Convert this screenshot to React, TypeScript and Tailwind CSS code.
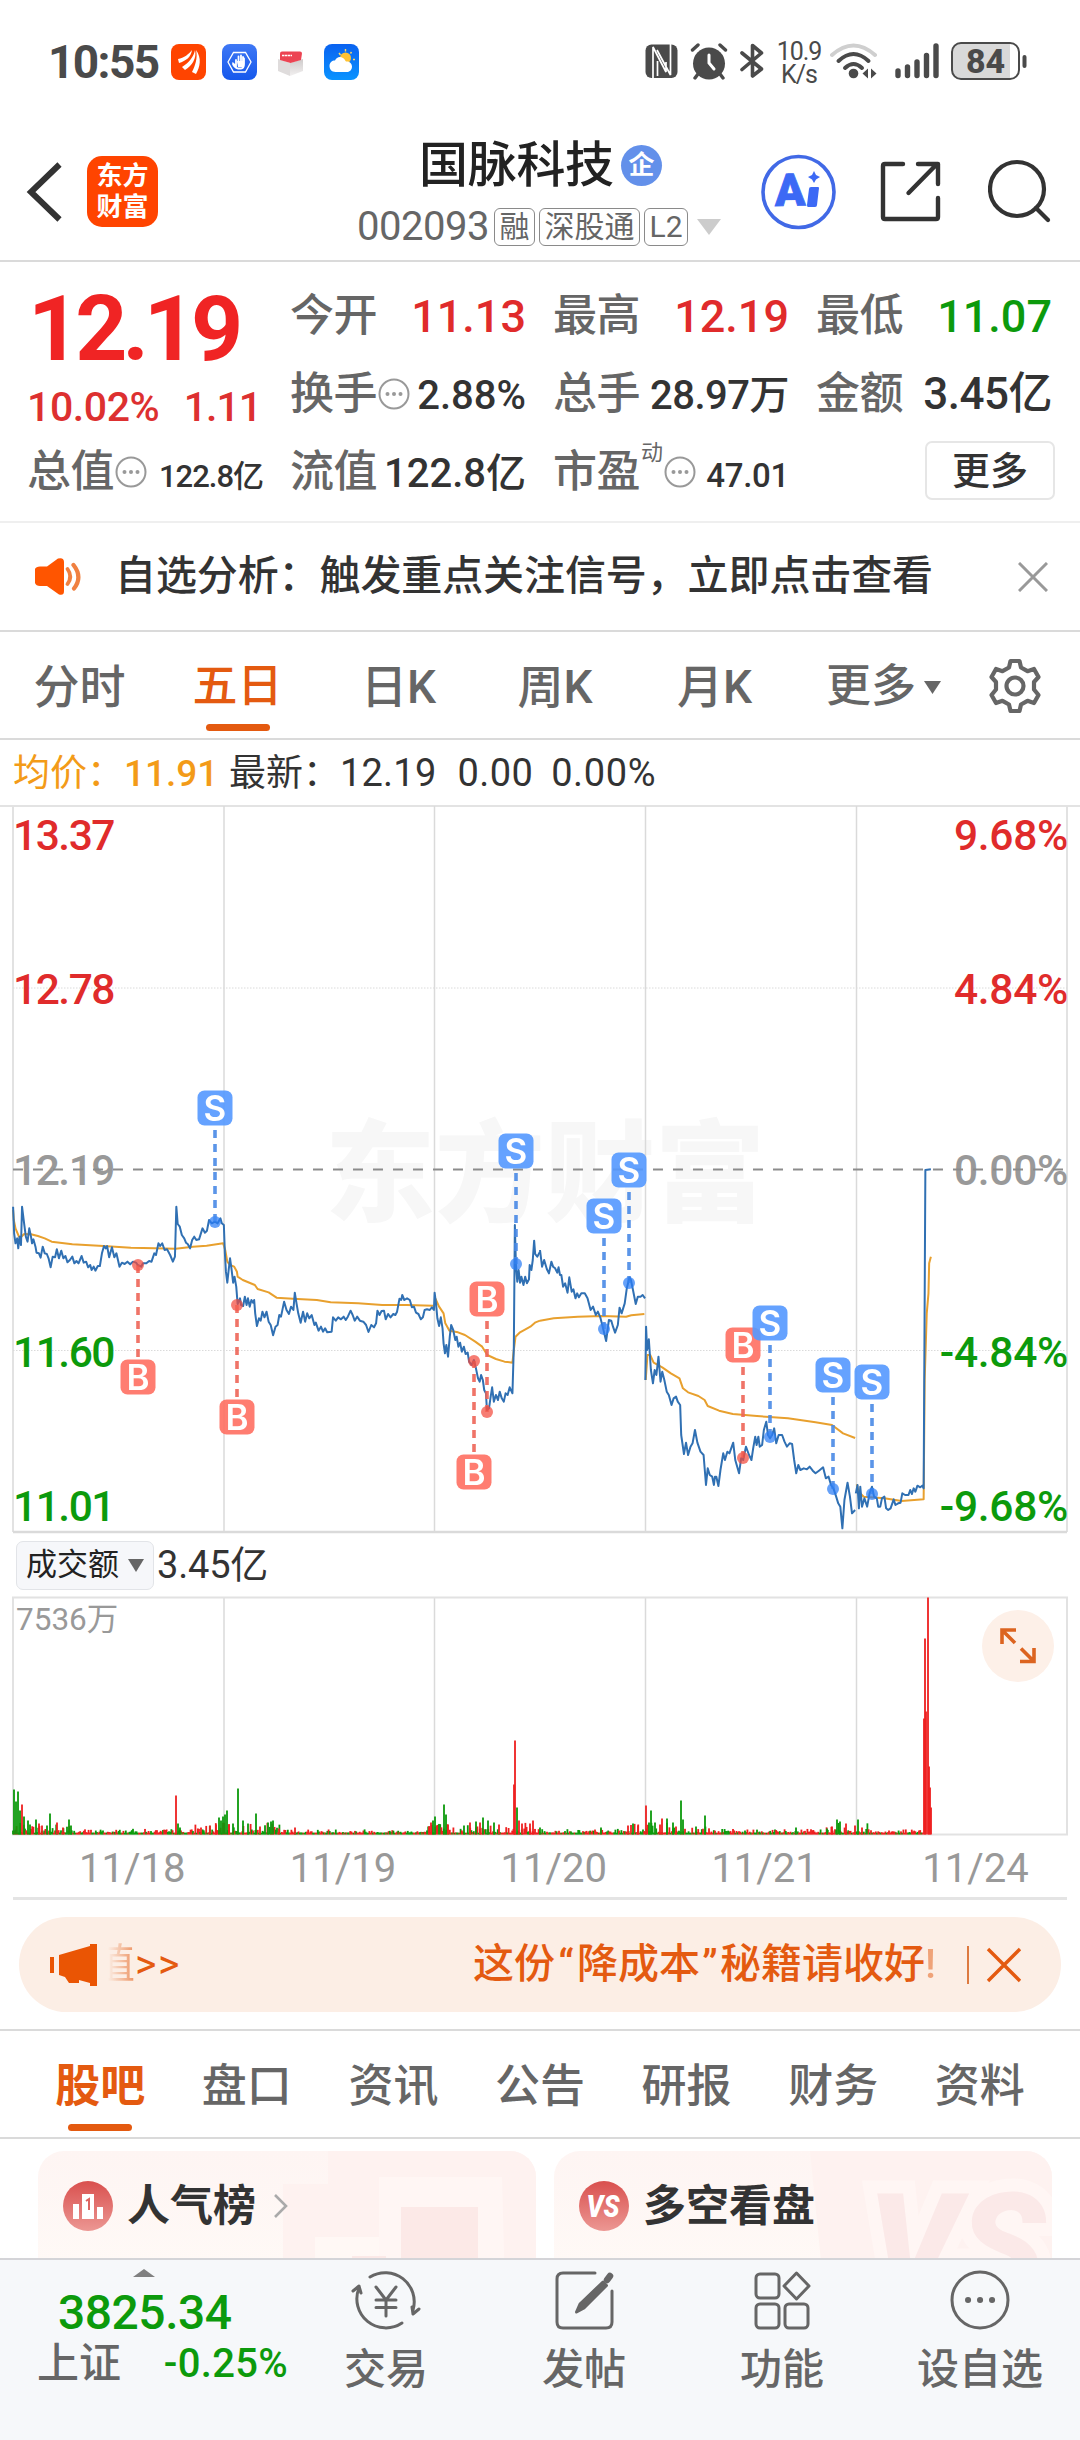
import type { ReactNode } from 'react';

const RED = '#ee2020';
const GREEN = '#0c9a0c';

const periods = [
  { name: '分时', width: 'w-[159px]' },
  { name: '五日', width: 'w-[157px]', active: true },
  { name: '日K', width: 'w-[165px]' },
  { name: '周K', width: 'w-[148px]' },
  { name: '月K', width: 'w-[171px]' },
];

const sections = ['股吧', '盘口', '资讯', '公告', '研报', '财务', '资料'];
const dates = ['11/18', '11/19', '11/20', '11/21', '11/24'];

const signals = [
  { type: 'S', x: 215, box: 1108, dot: 1222 },
  { type: 'B', x: 138, box: 1377, dot: 1265 },
  { type: 'B', x: 237, box: 1417, dot: 1305 },
  { type: 'B', x: 474, box: 1472, dot: 1361 },
  { type: 'B', x: 487, box: 1299, dot: 1412 },
  { type: 'S', x: 516, box: 1151, dot: 1264 },
  { type: 'S', x: 604, box: 1216, dot: 1329 },
  { type: 'S', x: 629, box: 1170, dot: 1283 },
  { type: 'B', x: 743, box: 1345, dot: 1458 },
  { type: 'S', x: 770, box: 1323, dot: 1437 },
  { type: 'S', x: 833, box: 1375, dot: 1489 },
  { type: 'S', x: 872, box: 1382, dot: 1494 },
];

const axisLabels = [
  { y: 850, left: '13.37', right: '9.68%', color: '#e02b2b' },
  { y: 1004, left: '12.78', right: '4.84%', color: '#e02b2b' },
  { y: 1185, left: '12.19', right: '0.00%', color: '#999999' },
  { y: 1367, left: '11.60', right: '-4.84%', color: GREEN },
  { y: 1521, left: '11.01', right: '-9.68%', color: GREEN },
];

// price line, first half of the window (days 1-3)
const priceA =
  '38,380 41,460 45,490 50,475 53,505 57,470 61,495 64,380 70,430 75,470 80,485 85,445 90,470 93,490 97,478 103,500 106,518 113,520 118,533 124,500 130,520 136,522 141,535 147,562 153,530 160,532 165,508 171,535 178,512 184,535 190,528 196,547 203,540 210,530 216,550 222,543 228,550 237,528 243,548 250,545 256,562 262,555 266,570 272,560 277,572 284,558 290,558 296,520 302,498 307,505 311,498 317,532 325,502 332,532 338,520 347,560 354,548 362,552 370,545 378,553 386,545 395,548 400,555 410,560 415,550 425,550 433,543 440,545 448,520 453,525 460,490 465,498 471,490 478,510 485,508 494,525 502,545 508,530 512,380 516,432 522,440 528,465 535,475 540,488 545,492 552,505 558,480 564,470 570,480 578,478 585,455 588,445 595,458 601,452 607,420 615,430 624,425 632,430 640,415 644,430 650,435 ' +
  '653,520 656,575 660,608 664,570 668,535 672,565 677,608 681,590 686,620 690,672 697,655 700,675 706,678 711,650 716,675 720,655 725,680 730,660 735,668 738,660 741,700 746,738 752,715 757,722 762,695 768,712 774,695 780,725 786,735 793,766 800,740 806,735 811,705 816,710 825,665 832,690 839,702 845,680 852,690 856,638 861,670 866,700 873,728 880,695 886,725 892,700 898,715 905,705 913,735 917,728 925,752 932,740 938,755 944,745 950,757 963,755 967,712 975,722 982,712 990,718 998,710 1004,720 1010,710 1018,692 1024,705 1030,722 1037,710 1045,722 1055,725 1063,735 1070,756 1078,735 1086,742 1092,730 1096,692 1102,705 1108,693 1115,692 1120,718 1127,702 1134,712 1142,702 1148,705 1153,695 1160,656 1165,660 1168,645 1174,660 1182,655 1190,660 1196,682 1202,680 1208,698 1215,702 1222,718 1228,712 1233,690 1240,688 1248,690 1254,682 1260,690 ' +
  '1262,638 1266,670 1270,715 1275,738 1280,712 1285,745 1288,790 1292,820 1296,795 1301,830 1306,770 1310,735 1316,750 1322,780 1326,770 1331,800 1336,788 1341,815 1347,800 1352,822 1358,818 1362,845 1370,855 1376,840 1382,865 1388,895 1393,905 1397,885 1402,900 1406,930 1411,940 1414,990 1420,985 1424,955 1429,922 1434,965 1440,945 1446,960 1451,935 1457,955 1463,965 1468,940 1474,945 1480,922 1488,940 1492,800 1495,435 1498,552 1502,605 1506,570 1510,608 1514,590 1520,615 1525,590 1530,610 1536,598 1538,555 1543,570 1547,540 1551,482 1554,522 1560,530 1568,515';

// second half (days 3-5), each session starts its own line
const priceB = [
  '0,510 6,560 12,540 20,568 26,580 33,545 38,560 44,565 50,578 54,562 58,585 62,585 67,620 73,610 80,638 85,592 92,635 97,628 103,655 108,640 113,652 120,640 130,640 138,655 147,690 154,680 162,705 168,695 175,712 182,740 192,783 200,720 207,722 212,740 218,758 226,735 231,683 237,700 246,670 252,625 260,592 264,600 270,630 278,672 284,650 292,650 298,645 305,655',
  '306,900 308,740 311,810 316,778 322,870 328,910 333,870 338,885 344,830 350,905 355,875 361,900 368,935 374,945 382,975 388,955 395,950 400,965 407,975 410,1065 418,1122 424,1088 430,1125 437,1100 443,1090 450,1050 457,1088 466,1115 475,1125 482,1215 487,1165 493,1185 500,1190 505,1215 508,1190 512,1190 518,1218 524,1170 532,1120 537,1140 544,1115 550,1120 561,1088 567,1140 578,1180 584,1135 590,1140 598,1100 607,1125 614,1140 619,1105 625,1070 629,1095 634,1070 638,1100 645,1095 650,1050 657,1025 662,1065 668,1075 674,1065 680,1045 686,1090 693,1065 703,1065 710,1085 717,1100 725,1090 732,1092 738,1140 744,1180 750,1155 756,1170 766,1165 775,1168 783,1160 792,1172 800,1180 810,1172 822,1162 830,1195 838,1190 845,1215 852,1225 860,1250 866,1270 872,1280 878,1345 884,1260 893,1208 900,1250 906,1300 915,1290',
  '917,1240 922,1215 926,1285 930,1220 935,1280 942,1255 950,1280 957,1240 964,1220 970,1250 978,1255 982,1280 988,1280 993,1255 1000,1250 1005,1285 1011,1290 1018,1285 1027,1258 1032,1275 1040,1270 1047,1268 1052,1240 1060,1245 1070,1245 1075,1230 1080,1242 1085,1225 1090,1235 1096,1217 1104,1222 1110,1217 1114,1225 1119,270 1135,268',
];

const averageA = [
  '38,390 40,420 45,445 55,470 62,470 70,462 90,463 110,468 130,475 150,485 180,489 210,493 300,498 380,503 450,505 510,506 560,500 600,497 648,490 654,510 660,545 668,555 680,560 688,575 690,590 705,600 740,615 748,627 780,637 803,653 850,656 920,660 960,667 1040,670 1110,675 1180,675 1258,677',
  '1264,655 1275,680 1288,700 1293,730 1305,752 1330,757 1350,765 1380,785 1400,800 1415,825 1440,837 1465,845 1488,848 1492,810 1497,770 1510,757 1540,740 1555,727 1568,722',
];

const averageB = [
  '0,722 40,715 110,710 180,708 250,710 265,706 303,702',
  '307,900 312,825 320,825 330,848 355,862 380,880 405,895 415,925 430,937 460,948 478,960 487,978 520,992 560,1002 630,1008 720,1015 800,1027 848,1035 880,1060 915,1074',
  '920,1213 925,1235 940,1250 1000,1255 1050,1263 1114,1258 1117,900 1123,700 1128,640 1130,550 1135,530',
];

// [x, height, up]
const spikes: [number, number, number][] = [
  [14, 45, 0], [16, 33, 0], [18, 43, 0], [20, 24, 0], [22, 30, 1], [24, 18, 0], [28, 14, 0], [30, 10, 0], [36, 15, 0], [39, 11, 1], [42, 9, 1], [47, 9, 0], [50, 21, 0], [57, 12, 1], [63, 7, 1], [69, 15, 0], [71, 9, 0],
  [176, 39, 1], [178, 11, 0], [180, 7, 0], [201, 7, 1], [210, 9, 1], [216, 10, 1], [219, 17, 0], [221, 14, 0], [223, 18, 0], [225, 20, 0], [227, 24, 0], [229, 10, 1], [233, 11, 0], [238, 46, 0], [243, 14, 0], [248, 11, 0], [256, 21, 0], [260, 8, 1], [268, 12, 0], [271, 13, 0], [273, 14, 0], [279, 6, 1], [295, 7, 1],
  [429, 8, 1], [431, 12, 1], [433, 14, 0], [435, 18, 0], [444, 30, 0], [446, 20, 0], [448, 10, 1], [464, 9, 0], [470, 12, 1], [476, 13, 0], [480, 12, 1], [483, 17, 0], [488, 14, 0], [494, 12, 0], [499, 10, 1], [514, 50, 1], [515, 94, 1], [517, 27, 0], [519, 14, 1], [522, 11, 1], [530, 11, 1], [533, 14, 1], [540, 7, 0],
  [601, 7, 0], [628, 9, 1], [633, 11, 0], [638, 9, 1], [646, 29, 1], [649, 12, 0], [651, 24, 0], [655, 12, 0], [660, 10, 1], [662, 16, 1], [667, 16, 0], [673, 12, 0], [676, 8, 1], [681, 34, 0], [683, 15, 0], [696, 8, 0], [705, 19, 0],
  [796, 7, 0], [827, 6, 0], [832, 8, 1], [837, 15, 0], [840, 13, 0], [846, 11, 1], [855, 9, 1], [858, 15, 0], [862, 7, 1],
  [924, 116, 1], [925, 196, 1], [926, 123, 1], [928, 237, 1], [929, 68, 1], [930, 47, 1], [931, 27, 1],
];

const busy = [[13, 70], [195, 280], [425, 540], [625, 712], [825, 870]];

function noiseBars() {
  const bars: [number, number, number][] = [];
  let seed = 7;
  const rand = () => {
    seed = (seed * 1103515245 + 12345) % 2147483648;
    return seed / 2147483648;
  };
  for (let x = 13; x < 923; x += 1.2) {
    const isBusy = busy.some(([from, to]) => x >= from && x <= to);
    const r = rand();
    bars.push([x, 1.8 + r * r * r * (isBusy ? 10 : 4), rand() > 0.45 ? 1 : 0]);
  }
  return bars;
}

const volumeBars = [...noiseBars(), ...spikes];

function StatusBar() {
  return (
    <div className="flex h-[130px] items-start pt-[42px] pl-[48px] text-[#4a4a4a]">
      <div className="h-[38px] w-[123px] text-[46px] leading-[40px] font-bold tracking-[-1.6px]">10:55</div>
      <svg className="mt-[2px]" width="190" height="36" viewBox="0 0 190 36">
        <defs>
          <linearGradient id="blue1" x1="0" y1="0" x2="0" y2="1"><stop stopColor="#3f78f5" /><stop offset="1" stopColor="#1558ec" /></linearGradient>
          <linearGradient id="blue2" x1="0" y1="0" x2="0" y2="1"><stop stopColor="#0a62f0" /><stop offset="1" stopColor="#0a93ff" /></linearGradient>
          <linearGradient id="box" x1="0" y1="0" x2="0" y2="1"><stop stopColor="#cfcbcb" /><stop offset="1" stopColor="#f2f0f0" /></linearGradient>
        </defs>
        <rect width="35" height="36" rx="8" fill="#ff4400" />
        <path d="M7 15C13 14 18 10 21 6C20 13 15 17 8 19Z" fill="#fff" />
        <path d="M11 23C18 19 23 12 24 6C26 14 21 22 14 26Z" fill="#fff" />
        <path d="M21 28C24 22 27 14 25 6C31 14 29 23 25 30Z" fill="#fff" />
        <rect x="51" width="35" height="36" rx="8" fill="url(#blue1)" />
        <path d="M57 18L62.500 8.500H74.500L80 18L74.500 28H62.500Z" fill="none" stroke="#fff" strokeWidth="1.300" />
        <path d="M65 16V22L62 19.500C61.500 20.500 64.500 24.500 67 24.500H70C72.500 24.500 73 22 73 20V14.500M67.500 19V12.500M70 18V11.500M72 18V13" fill="none" stroke="#fff" strokeWidth="1.800" strokeLinecap="round" />
        <path d="M66 17H73V23H67Z" fill="#fff" />
        <path d="M107 15L119 19V32L107 27Z" fill="#dfdcdc" />
        <path d="M132 15L119 19V32L132 27Z" fill="url(#box)" />
        <path d="M109 9.500Q109 7.500 111 7.500H129Q131 7.500 131 9.500L130 16L119.500 19L109 16Z" fill="#ec4453" />
        <path d="M111 11.500H121" stroke="#fff" strokeWidth="1.400" strokeDasharray="2.500 0.500" />
        <rect x="153" width="35" height="36" rx="8" fill="url(#blue2)" />
        <circle cx="174.500" cy="14" r="5.500" fill="#ffc233" />
        <path d="M168 9L169.500 11M174.500 5V7.500M180.500 8L179.500 9.500M182 15.500H184" stroke="#ffd966" strokeWidth="1.400" />
        <path d="M164.500 28C160.500 28 158.500 25 158.500 22C158.500 18.500 161 16.500 164 16.500C165.500 13 169 12 172 14C174 15.500 174.500 17 175 17.500C179 17 181 20 181 22.500C181 25.500 179 28 176 28Z" fill="#fff" />
      </svg>
      <div className="ml-[284px] flex">
        <svg className="mr-[11px]" width="120" height="38" viewBox="0 0 120 38" fill="none" stroke="#4a4a4a">
          <rect x="0.500" y="2.500" width="32" height="33.500" rx="6" fill="#4a4a4a" stroke="none" />
          <path d="M8 36V5L21 30V20M25.500 2V33L12 8M12.500 34V19" stroke="#fff" strokeWidth="1.700" />
          <circle cx="64" cy="21.500" r="16" fill="#4a4a4a" stroke="none" />
          <path d="M47.500 8L53 3M80.500 8L75 3M53 32L50 36M75 32L78 36" strokeWidth="3.400" strokeLinecap="round" />
          <path d="M64 13V21L69 27" stroke="#fff" strokeWidth="3" strokeLinecap="round" />
          <path d="M97 11L116.500 27L107.500 34V3.500L116.500 11L97 27.500" strokeWidth="3.600" strokeLinejoin="round" strokeLinecap="round" />
        </svg>
        <div className="mr-[8px] -mt-[2px] h-[44px] w-[46px] text-center text-[25px] leading-[23px] tracking-[-1px]">
          10.9
          <br />
          K/s
        </div>
        <svg width="204" height="38" viewBox="0 0 204 38" fill="none" stroke="#4a4a4a">
          <path d="M2 13Q23.500 -6 45 13" stroke="#cfcfcf" strokeWidth="4" strokeLinecap="round" />
          <path d="M8.500 19Q23.500 5 38.500 19M15 26Q23.500 18 32 26" strokeWidth="4" strokeLinecap="round" />
          <circle cx="23.500" cy="31.500" r="4.800" fill="#4a4a4a" stroke="none" />
          <path d="M38 26.500V36.500L32.500 31.500ZM41 26.500V36.500L46.500 31.500Z" fill="#4a4a4a" stroke="none" />
          <path d="M68 29V33.500M77.500 25V33.500M87 20V33.500M96.500 13.500V33.500M106 4V33.500" strokeWidth="5.400" strokeLinecap="round" />
          <path d="M129 2H180V36H129Q123 36 123 30V8Q123 2 129 2Z" fill="#d9d9d9" stroke="none" />
          <rect x="122" y="1" width="67" height="36" rx="9" strokeWidth="2" />
          <path d="M194.500 15V24" strokeWidth="4" strokeLinecap="round" />
          <text x="155.500" y="31" textAnchor="middle" fontSize="34" fontWeight="800" fill="#4a4a4a" stroke="none">84</text>
        </svg>
      </div>
    </div>
  );
}

function Tag({ children }: { children: ReactNode }) {
  return (
    <span className="flex h-[38px] items-center rounded-[6px] border border-[#8a8a8a] px-[4.500px] text-[30px] leading-none">
      {children}
    </span>
  );
}

function Header() {
  return (
    <div className="flex h-[132px] items-start border-b-2 border-[#dadada]">
      <svg className="mt-[32px] ml-[26px]" width="38" height="60" viewBox="0 0 38 60" fill="none" stroke="#333" strokeWidth="6">
        <path d="M33.500 2.500L5 30L33.500 57.500" />
      </svg>
      <div className="mt-[26px] ml-[23px] flex h-[71px] w-[71px] flex-col items-center justify-center rounded-[15px] bg-[#ff4400] text-[26px] leading-[31px] font-bold text-white">
        <span>东方</span>
        <span>财富</span>
      </div>
      <div className="mt-[7px] ml-[199px] w-[364px]">
        <div className="flex h-[56px] items-center pl-[62px] text-[49px] leading-none font-medium tracking-[-0.300px] text-[#222]">
          国脉科技
          <span className="ml-[7px] flex h-[41px] w-[41px] items-center justify-center rounded-full bg-[#6390ea] text-[26px] font-bold text-white">企</span>
        </div>
        <div className="mt-[15px] flex items-center text-[#666]">
          <span className="w-[137px] text-[40px] leading-[38px] tracking-[-0.500px]">002093</span>
          <Tag>融</Tag>
          <span className="w-[4px]" />
          <Tag>深股通</Tag>
          <span className="w-[4px]" />
          <Tag>L2</Tag>
          <svg className="ml-[9px]" width="24" height="16" viewBox="0 0 24 16" fill="#ccc"><path d="M0 0H24L12 16Z" /></svg>
        </div>
      </div>
      <svg className="mt-[24px] ml-[40px]" width="76" height="76" viewBox="0 0 76 76" fill="#3c69f5">
        <circle cx="37.500" cy="38" r="35.500" fill="none" stroke="#4169e6" strokeWidth="3.600" />
        <text x="14" y="52" fontSize="45" fontWeight="900" stroke="#3c69f5" strokeWidth="0.800" transform="rotate(-1 14 52)">A</text>
        <path d="M50 33H57Q58 33 58 34L56 51Q56 53 54 53H47Q46 53 46 51L48 35Q48 33 50 33Z" />
        <path d="M53 17L55 21L59 23L55 25.500L53 29L51 25.500L47 23L51 21Z" />
      </svg>
      <svg className="mt-[31px] ml-[43px]" width="62" height="62" viewBox="0 0 62 62" fill="none" stroke="#333" strokeWidth="4.400" strokeLinecap="round" strokeLinejoin="round">
        <path d="M23 3H5Q3 3 3 5V56Q3 58 5 58H56Q58 58 58 56V37M38 3H58V23M56 4L28.500 32" />
      </svg>
      <svg className="mt-[29px] ml-[46px]" width="64" height="64" viewBox="0 0 64 64" fill="none" stroke="#333" strokeWidth="4.200" strokeLinecap="round">
        <circle cx="29" cy="30" r="27" />
        <path d="M48 49L60 61" />
      </svg>
    </div>
  );
}

function InfoDots() {
  return (
    <svg width="32" height="32" viewBox="0 0 32 32" fill="#999">
      <circle cx="16" cy="16" r="14.500" fill="none" stroke="#999" strokeWidth="2" />
      <circle cx="9.500" cy="16" r="2" />
      <circle cx="16" cy="16" r="2" />
      <circle cx="22.500" cy="16" r="2" />
    </svg>
  );
}

function Quote({ label, children, info }: { label: string; children: ReactNode; info?: ReactNode }) {
  return (
    <div className="flex h-[78px] items-center text-[44px] leading-none font-medium whitespace-nowrap text-[#666]">
      <span className="-ml-[1px] tracking-[-0.5px]">{label}</span>
      {info}
      <span className="ml-auto text-[#333]">{children}</span>
    </div>
  );
}

function Quotes() {
  return (
    <div className="flex h-[261px] gap-[28px] border-b-2 border-[#efefef] pt-[15px] pl-[28px]">
      <div className="w-[235px]">
        <div className="h-[106px] text-[91px] leading-[104px] font-bold tracking-[-5px] text-[#f02424]">12.19</div>
        <div className="flex h-[50px] items-center justify-between text-[41px] font-medium text-[#dd3030]">
          <span className="-ml-[1px] tracking-[-0.4px]">10.02%</span>
          <span className="pr-[2px] tracking-[-1px]">1.11</span>
        </div>
        <Quote label="总值" info={<span className="ml-[1px]"><InfoDots /></span>}><span className="text-[31px] tracking-[-1px]">122.8亿</span></Quote>
      </div>
      <div className="w-[235px]">
        <Quote label="今开"><span className="text-[45px] text-[#e02b2b]">11.13</span></Quote>
        <Quote label="换手" info={<span className="ml-[1px]"><InfoDots /></span>}><span className="text-[40px]">2.88%</span></Quote>
        <Quote label="流值"><span className="text-[40px]">122.8亿</span></Quote>
      </div>
      <div className="w-[235px]">
        <Quote label="最高"><span className="text-[45px] text-[#e02b2b]">12.19</span></Quote>
        <Quote label="总手"><span className="text-[40px] tracking-[-0.500px]">28.97万</span></Quote>
        <Quote
          label="市盈"
          info={<><span className="-mt-[38px] mr-[1px] ml-[1px] text-[22px] font-normal">动</span><InfoDots /></>}
        >
          <span className="text-[33px] tracking-[-0.300px]">47.01</span>
        </Quote>
      </div>
      <div className="w-[238px]">
        <div className="w-[235px]">
          <Quote label="最低"><span className="text-[45px] text-[#0c9a0c]">11.07</span></Quote>
          <Quote label="金额"><span className="text-[44px] tracking-[-0.500px]">3.45亿</span></Quote>
        </div>
        <div className="mt-[8px] ml-auto flex h-[59px] w-[130px] items-center justify-center rounded-[7px] border-2 border-[#e6e6e6] text-[38px] leading-none font-medium text-[#333]">更多</div>
      </div>
    </div>
  );
}

function Notice() {
  return (
    <div className="flex h-[109px] items-center border-b-2 border-[#dadada] pt-[1px]">
      <svg className="ml-[34px]" width="48" height="40" viewBox="0 0 48 40">
        <path d="M1 12Q2 9.500 6 9.500H13L24 1.500Q30 0 30 5V34Q30 39 25 37.500L13 29H6Q2 29 1 26Z" fill="#ff5500" />
        <path d="M33.500 12Q39 19.500 33.500 27" fill="none" stroke="#f08040" strokeWidth="3.800" strokeLinecap="round" />
        <path d="M39.500 8Q49 20 40 31.500" fill="none" stroke="#f08040" strokeWidth="4.200" strokeLinecap="round" />
      </svg>
      <span className="ml-[33px] text-[41px] font-medium tracking-[-0.100px] whitespace-nowrap text-[#333]">自选分析：触发重点关注信号，立即点击查看</span>
      <svg className="mr-[32px] ml-auto" width="30" height="30" viewBox="0 0 30 30" stroke="#999" strokeWidth="3">
        <path d="M1 1L29 29M29 1L1 29" />
      </svg>
    </div>
  );
}

function PeriodTabs() {
  return (
    <div className="flex h-[108px] border-b-2 border-[#dadada] font-medium text-[#666]">
      {periods.map((p) => (
        <div key={p.name} className={`flex flex-col items-center pt-[30px] ${p.width}`}>
          <span className={p.active ? 'text-[45px] leading-[50px] text-[#e45a10]' : 'text-[46px] leading-[50px]'}>{p.name}</span>
          {p.active && <span className="mt-[12px] h-[7px] w-[64px] rounded-full bg-[#e45a10]" />}
        </div>
      ))}
      <div className="ml-[26px] flex h-[110px] items-center text-[45px]">
        更多
        <svg className="ml-[8px]" width="17" height="13" viewBox="0 0 17 13" fill="#666"><path d="M0 0H17L8.500 13Z" /></svg>
      </div>
      <svg className="mt-[26px] ml-[47px]" width="54" height="56" viewBox="0 0 54 56" fill="none" stroke="#666" strokeWidth="4.200" strokeLinejoin="round">
        <path d="M22.500 3H31.500L33 9.500L39.500 13.200L46 11L50.500 19L46 24V31.500L50.500 37L46 45L39.500 42.800L33 46.500L31.500 53H22.500L21 46.500L14.500 42.800L8 45L3.500 37L8 31.500V24L3.500 19L8 11L14.500 13.200L21 9.500Z" />
        <circle cx="27" cy="28" r="8.500" />
      </svg>
    </div>
  );
}

function PriceChart() {
  return (
    <>
      <div className="flex h-[65px] items-center pt-[1px] pl-[13px] text-[37px] leading-none text-[#333]">
        <span className="w-[216px] text-[#f39b18]">均价：<span className="font-medium">11.91</span></span>
        <span>最新：</span>
        <span className="text-[38px] tracking-[0.200px]">12.19</span>
        <span className="ml-[21px] text-[38px] tracking-[0.400px]">0.00</span>
        <span className="ml-[18px] text-[38px] tracking-[0.600px]">0.00%</span>
      </div>
      <svg className="block" width="1080" height="729" viewBox="0 805 1080 729">
        <text x="325" y="1213" fontSize="110" fontWeight="900" fill="#f7f7f7">东方财富</text>
        <g stroke="#dadada" strokeWidth="1.500">
          <path d="M0 806H1080" />
          <path d="M224 806V1532M434.500 806V1532M645.500 806V1532M856.500 806V1532" />
          <path d="M13 806V1532M1067 806V1532" strokeWidth="2" stroke="#e2e2e2" />
          <path d="M13 1532H1067" strokeWidth="2.500" />
          <path d="M13 988H1067M13 1350.500H1067" strokeWidth="1" strokeDasharray="1.500 1.500" />
        </g>
        {axisLabels.map((a) => (
          <g key={a.y} fill={a.color} fontSize="42.500" fontWeight="500">
            <text x="13" y={a.y} textLength="102.500" lengthAdjust="spacing">{a.left}</text>
            <text x="1068" y={a.y} textAnchor="end" letterSpacing="-0.300">{a.right}</text>
          </g>
        ))}
        <path d="M13 1169.500H1067" stroke="#8c8c8c" strokeWidth="1.800" strokeDasharray="10 10" />
        <svg x="0" y="1080" width="1080" height="460" viewBox="0 0 3136 1380" preserveAspectRatio="none" fill="none" strokeLinejoin="round">
          <g stroke="#e8a02e" strokeWidth="2">
            {averageA.map((p) => <polyline key={p} points={p} vectorEffect="non-scaling-stroke" />)}
            {averageB.map((p) => <polyline key={p} points={p} transform="translate(1568)" vectorEffect="non-scaling-stroke" />)}
          </g>
          <g stroke="#3070b3" strokeWidth="2">
            <polyline points={priceA} vectorEffect="non-scaling-stroke" />
            {priceB.map((p) => <polyline key={p} points={p} transform="translate(1568)" vectorEffect="non-scaling-stroke" />)}
          </g>
        </svg>
        {signals.map((s) => {
          const sell = s.type === 'S';
          const up = s.box < s.dot;
          return (
            <g key={`${s.type}${s.x}`} opacity="0.900">
              <path
                d={up ? `M${s.x} ${s.box + 22}V${s.dot}` : `M${s.x} ${s.box - 20}V${s.dot}`}
                stroke={sell ? '#4a8ae6' : '#ee6558'}
                strokeWidth="3.600"
                strokeDasharray="8 6"
              />
              <circle cx={s.x} cy={s.dot} r="6" fill={sell ? '#2b7df5' : '#f34b3d'} fillOpacity="0.800" />
              <rect x={s.x - 17.5} y={s.box - 17.5} width="35" height="35" rx="7" fill={sell ? '#5599ff' : '#ff7062'} />
              <text x={s.x} y={s.box + 12.5} textAnchor="middle" fontSize="35" fontWeight="600" fill="#fff" fontFamily="Inter">{s.type}</text>
            </g>
          );
        })}
      </svg>
    </>
  );
}

function VolumeChart() {
  return (
    <>
      <div className="flex h-[62px] items-center pl-[16px]">
        <span className="flex h-[49px] w-[138px] items-center rounded-[7px] border border-[#e2e4e8] bg-[#f6f7fa] pl-[9px] text-[31px] text-[#222]">
          成交额
          <svg className="ml-[9px]" width="16" height="13" viewBox="0 0 16 13" fill="#666"><path d="M0 0H16L8 13Z" /></svg>
        </span>
        <span className="ml-[3px] text-[38px] leading-none tracking-[-0.200px] text-[#333]">3.45亿</span>
      </div>
      <svg className="block" width="1080" height="242" viewBox="0 1596 1080 242">
        <g stroke="#dadada" strokeWidth="1.500" fill="none">
          <path d="M224 1597V1835M434.500 1597V1835M645.500 1597V1835M856.500 1597V1835" />
          <rect x="13" y="1597.500" width="1054" height="237" strokeWidth="2" stroke="#e2e2e2" />
        </g>
        <text x="16" y="1630" fontSize="31.500" fill="#999">7536万</text>
        {volumeBars.map(([x, h, up], i) => (
          <rect key={i} x={x - 0.9} y={1834.5 - h} width="1.800" height={h} fill={up ? RED : GREEN} />
        ))}
        <circle cx="1018" cy="1646" r="36" fill="#fdf0e8" />
        <g fill="none" stroke="#dc6420" strokeWidth="3.600">
          <path d="M1002 1644V1630H1016M1003 1631L1015 1643" />
          <path d="M1020 1661.500H1034V1648M1033 1660.500L1021 1648.500" />
        </g>
      </svg>
      <div className="mx-[13px] flex h-[62px] items-center border-b-[3px] border-[#e4e4e4] pt-[2px] text-[40px] text-[#999]">
        {dates.map((d) => (
          <span key={d} className="w-[211px] pl-[66px]">{d}</span>
        ))}
      </div>
    </>
  );
}

function Banner() {
  return (
    <div className="flex h-[131px] items-center border-b-2 border-[#dadada]">
      <div className="mx-[19px] flex h-[95px] w-[1042px] items-center rounded-full bg-[#fceee5] text-[41px] text-[#e45a10]">
        <svg className="ml-[31px]" width="48" height="42" viewBox="0 0 48 42" fill="#ea5504">
          <path d="M0 13H4V29H0ZM9 11L40 2V0H47V42H40V39L29 36V39H19L15 33L9 31Z" />
        </svg>
        <span className="ml-[10px] w-[26px] overflow-hidden bg-gradient-to-r from-transparent to-[#e45a10]/60 bg-clip-text text-transparent">
          <span className="-ml-[14px]">值</span>
        </span>
        <span className="ml-[1px] tracking-[1.500px]">&gt;&gt;</span>
        <span className="ml-auto flex font-medium whitespace-nowrap">
          这份
          <span className="w-[22px] text-center">“</span>
          降成本
          <span className="w-[20px] text-center">”</span>
          秘籍请收好
          <span className="w-[11px] opacity-50">!</span>
        </span>
        <span className="ml-[31px] h-[38px] w-[2px] bg-[#dd7a40]" />
        <svg className="mr-[39px] ml-[17px]" width="36" height="36" viewBox="0 0 36 36" stroke="#e45a10" strokeWidth="3.400">
          <path d="M2 2L34 34M34 2L2 34" />
        </svg>
      </div>
    </div>
  );
}

function SectionTabs() {
  return (
    <div className="flex h-[108px] border-b-2 border-[#dadada] px-[27px] text-[45px] font-medium text-[#666]">
      {sections.map((name, i) => (
        <div key={name} className="flex flex-1 flex-col items-center pt-[31px]">
          <span className={i === 0 ? 'leading-[50px] font-bold text-[#e45a10]' : 'leading-[50px]'}>{name}</span>
          {i === 0 && <span className="mt-[12px] h-[7px] w-[64px] rounded-full bg-[#e45a10]" />}
        </div>
      ))}
    </div>
  );
}

function Cards() {
  return (
    <div className="flex h-[121px] gap-[18px] overflow-hidden border-b-2 border-[#d4d4d8] pt-[12px] pl-[38px]">
      <div className="relative h-[140px] w-[498px] overflow-hidden rounded-[26px] bg-linear-to-b from-[#fef5f3] to-[#fffaf7]">
        <svg className="absolute top-0 left-0" width="498" height="140" viewBox="0 0 498 140">
          <path d="M290 0H498V140H245V33H290Z" fill="#fef2f0" />
          <path d="M277 86H341V140H277Z" fill="#fff8f5" />
          <path d="M341 26H464L467 140H341Z" fill="#fff6f4" />
          <path d="M363 56H440V140H363ZM314 105H348V140H314Z" fill="#fce9e7" />
        </svg>
        <div className="relative flex h-[110px] items-center pl-[24px]">
          <svg width="52" height="52" viewBox="0 0 52 52">
            <defs><linearGradient id="badge" x1="0" y1="0" x2="0" y2="1"><stop stopColor="#d9504e" /><stop offset="1" stopColor="#ec9793" /></linearGradient></defs>
            <circle cx="26" cy="26" r="25" fill="url(#badge)" />
            <path d="M11 24H17V39H11ZM20 14H32V39H20ZM35 27H41V39H35Z" fill="#fff" />
            <path d="M24 21L27 19V30" fill="none" stroke="#dd6561" strokeWidth="2" />
          </svg>
          <span className="ml-[13px] text-[43px] leading-none font-bold text-[#333]">人气榜</span>
          <svg className="ml-[17px]" width="16" height="26" viewBox="0 0 16 26" fill="none" stroke="#aaa" strokeWidth="2.600"><path d="M2 2L13 13L2 24" /></svg>
        </div>
      </div>
      <div className="relative h-[140px] w-[498px] overflow-hidden rounded-[26px] bg-linear-to-b from-[#fef5f3] to-[#fffaf7]">
        <svg className="absolute top-0 left-0" width="498" height="140" viewBox="0 0 498 140">
          <path d="M256 0H498V140H270Z" fill="#fef2f0" />
          <text x="314" y="144" fontSize="142" fontWeight="900" fontStyle="italic" fill="#fbe9e8" stroke="#fff6f4" strokeWidth="26" paintOrder="stroke">VS</text>
        </svg>
        <div className="relative flex h-[110px] items-center pl-[24px]">
          <svg width="52" height="52" viewBox="0 0 52 52">
            <circle cx="26" cy="26" r="25" fill="url(#badge)" />
            <text x="25" y="37" textAnchor="middle" fontSize="31" fontWeight="900" fontStyle="italic" fill="#fff" textLength="33" lengthAdjust="spacingAndGlyphs">VS</text>
          </svg>
          <span className="ml-[13px] text-[43px] leading-none font-bold text-[#333]">多空看盘</span>
        </div>
      </div>
    </div>
  );
}

function NavItem({ label, children, width }: { label: string; children: ReactNode; width: string }) {
  return (
    <div className={`flex flex-col items-center pt-[9px] ${width}`}>
      <svg width="70" height="62" viewBox="0 0 70 62" fill="none" stroke="#666" strokeWidth="3" strokeLinecap="round" strokeLinejoin="round">
        {children}
      </svg>
      <span className="mt-[14px] text-[42px] leading-[50px] font-medium text-[#666]">{label}</span>
    </div>
  );
}

function Footer() {
  return (
    <div className="flex h-[181px] bg-[#f6f8fa]">
      <div className="w-[288px]">
        <svg className="mt-[9px] ml-[133px]" width="22" height="8" viewBox="0 0 22 8" fill="#808080"><path d="M11 0L22 8H0Z" /></svg>
        <div className="mt-[12px] ml-[58px] text-[48px] leading-[48px] font-medium tracking-[-0.500px] text-[#0c9a0c]">3825.34</div>
        <div className="mt-[2px] flex items-center justify-between pl-[37px] leading-[50px]">
          <span className="text-[42px] font-medium text-[#666]">上证</span>
          <span className="text-[40px] font-medium tracking-[0.300px] text-[#0c9a0c]">-0.25%</span>
        </div>
      </div>
      <NavItem label="交易" width="w-[196px]">
        <path d="M19 8A29 29 0 0 1 62 41M51 54A29 29 0 0 1 8 19M2 22L8 17L10 24M68 40L62 45L61 38" />
        <path d="M25 18L35 31L45 18M35 31V47M25 31H45M25 38.500H45" />
      </NavItem>
      <NavItem label="发帖" width="w-[200px]">
        <path d="M46 4H14Q8 4 8 10V53Q8 59 14 59H57Q63 59 63 53V22" />
        <path d="M61 7L58 11" strokeWidth="6.500" />
        <path d="M54 13L57.500 16.500L35 39L27.500 43L31 35Z" fill="#666" />
      </NavItem>
      <NavItem label="功能" width="w-[196px]">
        <rect x="9" y="5" width="23" height="24" rx="4" />
        <rect x="9" y="35" width="23" height="24" rx="4" />
        <rect x="38" y="35" width="23" height="24" rx="4" />
        <path d="M49.500 4L62 17L49.500 30L37 17Z" />
      </NavItem>
      <NavItem label="设自选" width="w-[200px]">
        <circle cx="35" cy="31" r="28" />
        <path d="M23 31H23.100M35 31H35.100M47 31H47.100" strokeWidth="6" />
      </NavItem>
    </div>
  );
}

export default function App() {
  return (
    <div className="h-[2440px] w-[1080px] overflow-hidden bg-white font-[Roboto,'Noto_Sans_CJK_SC',sans-serif]">
      <StatusBar />
      <Header />
      <Quotes />
      <Notice />
      <PeriodTabs />
      <PriceChart />
      <VolumeChart />
      <Banner />
      <SectionTabs />
      <Cards />
      <Footer />
    </div>
  );
}
